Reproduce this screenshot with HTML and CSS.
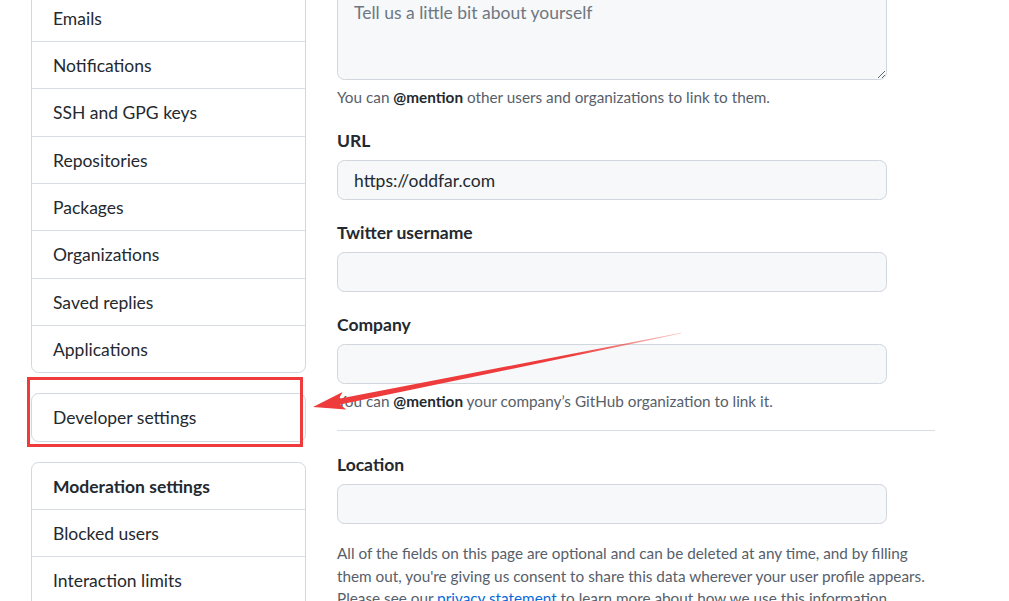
FILE: index.html
```html
<!DOCTYPE html>
<html lang="en">
<head>
<meta charset="utf-8">
<title>Settings</title>
<link rel="stylesheet" href="styles.css">
</head>
<body>
<div class="page">
  <nav class="side">
    <div class="menu">
      <a class="item">Account</a>
      <a class="item">Emails</a>
      <a class="item">Notifications</a>
      <a class="item">SSH and GPG keys</a>
      <a class="item">Repositories</a>
      <a class="item">Packages</a>
      <a class="item">Organizations</a>
      <a class="item">Saved replies</a>
      <a class="item">Applications</a>
    </div>
    <div class="menu">
      <a class="item">Developer settings</a>
    </div>
    <div class="menu">
      <div class="item head">Moderation settings</div>
      <a class="item">Blocked users</a>
      <a class="item">Interaction limits</a>
      <a class="item">Code review limits</a>
    </div>
  </nav>
  <main class="main">
    <div class="group first">
      <label class="label">Bio</label>
      <textarea class="field area" placeholder="Tell us a little bit about yourself"></textarea>
      <p class="note">You can <strong>@mention</strong> other users and organizations to link to them.</p>
    </div>
    <div class="group">
      <label class="label">URL</label>
      <input class="field" type="text" value="https://oddfar.com">
    </div>
    <div class="group">
      <label class="label">Twitter username</label>
      <input class="field" type="text" value="">
    </div>
    <div class="group">
      <label class="label">Company</label>
      <input class="field" type="text" value="">
      <p class="note">You can <strong>@mention</strong> your company’s GitHub organization to link it.</p>
    </div>
    <hr class="divider">
    <div class="group loc">
      <label class="label">Location</label>
      <input class="field" type="text" value="">
    </div>
    <p class="info">All of the fields on this page are optional and can be deleted at any time, and by filling them out, you're giving us consent to share this data wherever your user profile appears. Please see our <a class="link">privacy statement</a> to learn more about how we use this information.</p>
  </main>
</div>
<svg class="annot" width="1009" height="601" viewBox="0 0 1009 601">
  <defs>
    <linearGradient id="fade" gradientUnits="userSpaceOnUse" x1="313" y1="407" x2="681" y2="333">
      <stop offset="0" stop-color="#ee3b3b" stop-opacity="1"/>
      <stop offset="0.7" stop-color="#ee3b3b" stop-opacity="1"/>
      <stop offset="1" stop-color="#ee3b3b" stop-opacity="0.25"/>
    </linearGradient>
  </defs>
  <rect x="28.5" y="378.5" width="273" height="67" fill="none" stroke="#ee3b3b" stroke-width="3"/>
  <polygon fill="url(#fade)" points="313,407 342.6,391.9 338.9,398.8 681,332.7 681.2,333.6 340.1,404.6 346.2,409.5"/>
</svg>
</body>
</html>
```

FILE: styles.css
```css
* { box-sizing: border-box; }
html, body {
  margin: 0;
  padding: 0;
  background: #ffffff;
  overflow: hidden;
}
body {
  font-family: Lato, "Liberation Sans", Arial, sans-serif;
  color: #24292f;
  font-size: 17.5px;
  position: relative;
  height: 601px;
}
.page {
  display: flex;
  gap: 31px;
  padding-left: 31px;
  margin-top: -53.67px;
}
.side {
  width: 275px;
  flex: none;
  display: flex;
  flex-direction: column;
  gap: 20px;
}
.menu {
  border: 1px solid #d0d7de;
  border-radius: 7.5px;
  display: flex;
  flex-direction: column;
}
.item {
  display: block;
  padding: 11px 21px 9px;
  line-height: 26.33px;
  font-size: 17.5px;
  color: #24292f;
  border-bottom: 1px solid #d8dee4;
}
.item:last-child { border-bottom: none; }
.head { font-weight: 700; }
.main {
  width: 598px;
  flex: none;
  padding-top: 14px;
}
.group { margin-top: 20px; }
.group.first { margin-top: 0; }
.label {
  display: block;
  font-weight: 700;
  font-size: 17.5px;
  line-height: 25px;
  margin-bottom: 7px;
  color: #24292f;
}
.field {
  display: block;
  width: 550px;
  height: 40px;
  border: 1px solid #d0d7de;
  border-radius: 7.5px;
  background: #f6f8fa;
  padding: 6px 16px;
  font-family: Lato, "Liberation Sans", Arial, sans-serif;
  font-size: 17.5px;
  line-height: 25px;
  color: #24292f;
  outline: none;
}
.area {
  height: 87.75px;
  resize: vertical;
  padding-top: 6.25px;
}
.field::placeholder { color: #6e7781; }
.note {
  margin: 4px 0 0;
  font-size: 15.3px;
  line-height: 24px;
  color: #57606a;
  padding-top: 1px;
  height: 24px;
}
.note strong { color: #24292f; font-weight: 700; }
.divider {
  border: 0;
  border-top: 1px solid #d8dee4;
  margin: 18px 0 0;
  height: 0;
}
.group.loc { margin-top: 21px; }
.info {
  margin: 18px 0 0;
  font-size: 15.3px;
  line-height: 22.5px;
  color: #57606a;
}
.link { color: #0969da; }
.annot {
  position: absolute;
  left: 0;
  top: 0;
  pointer-events: none;
}
```
